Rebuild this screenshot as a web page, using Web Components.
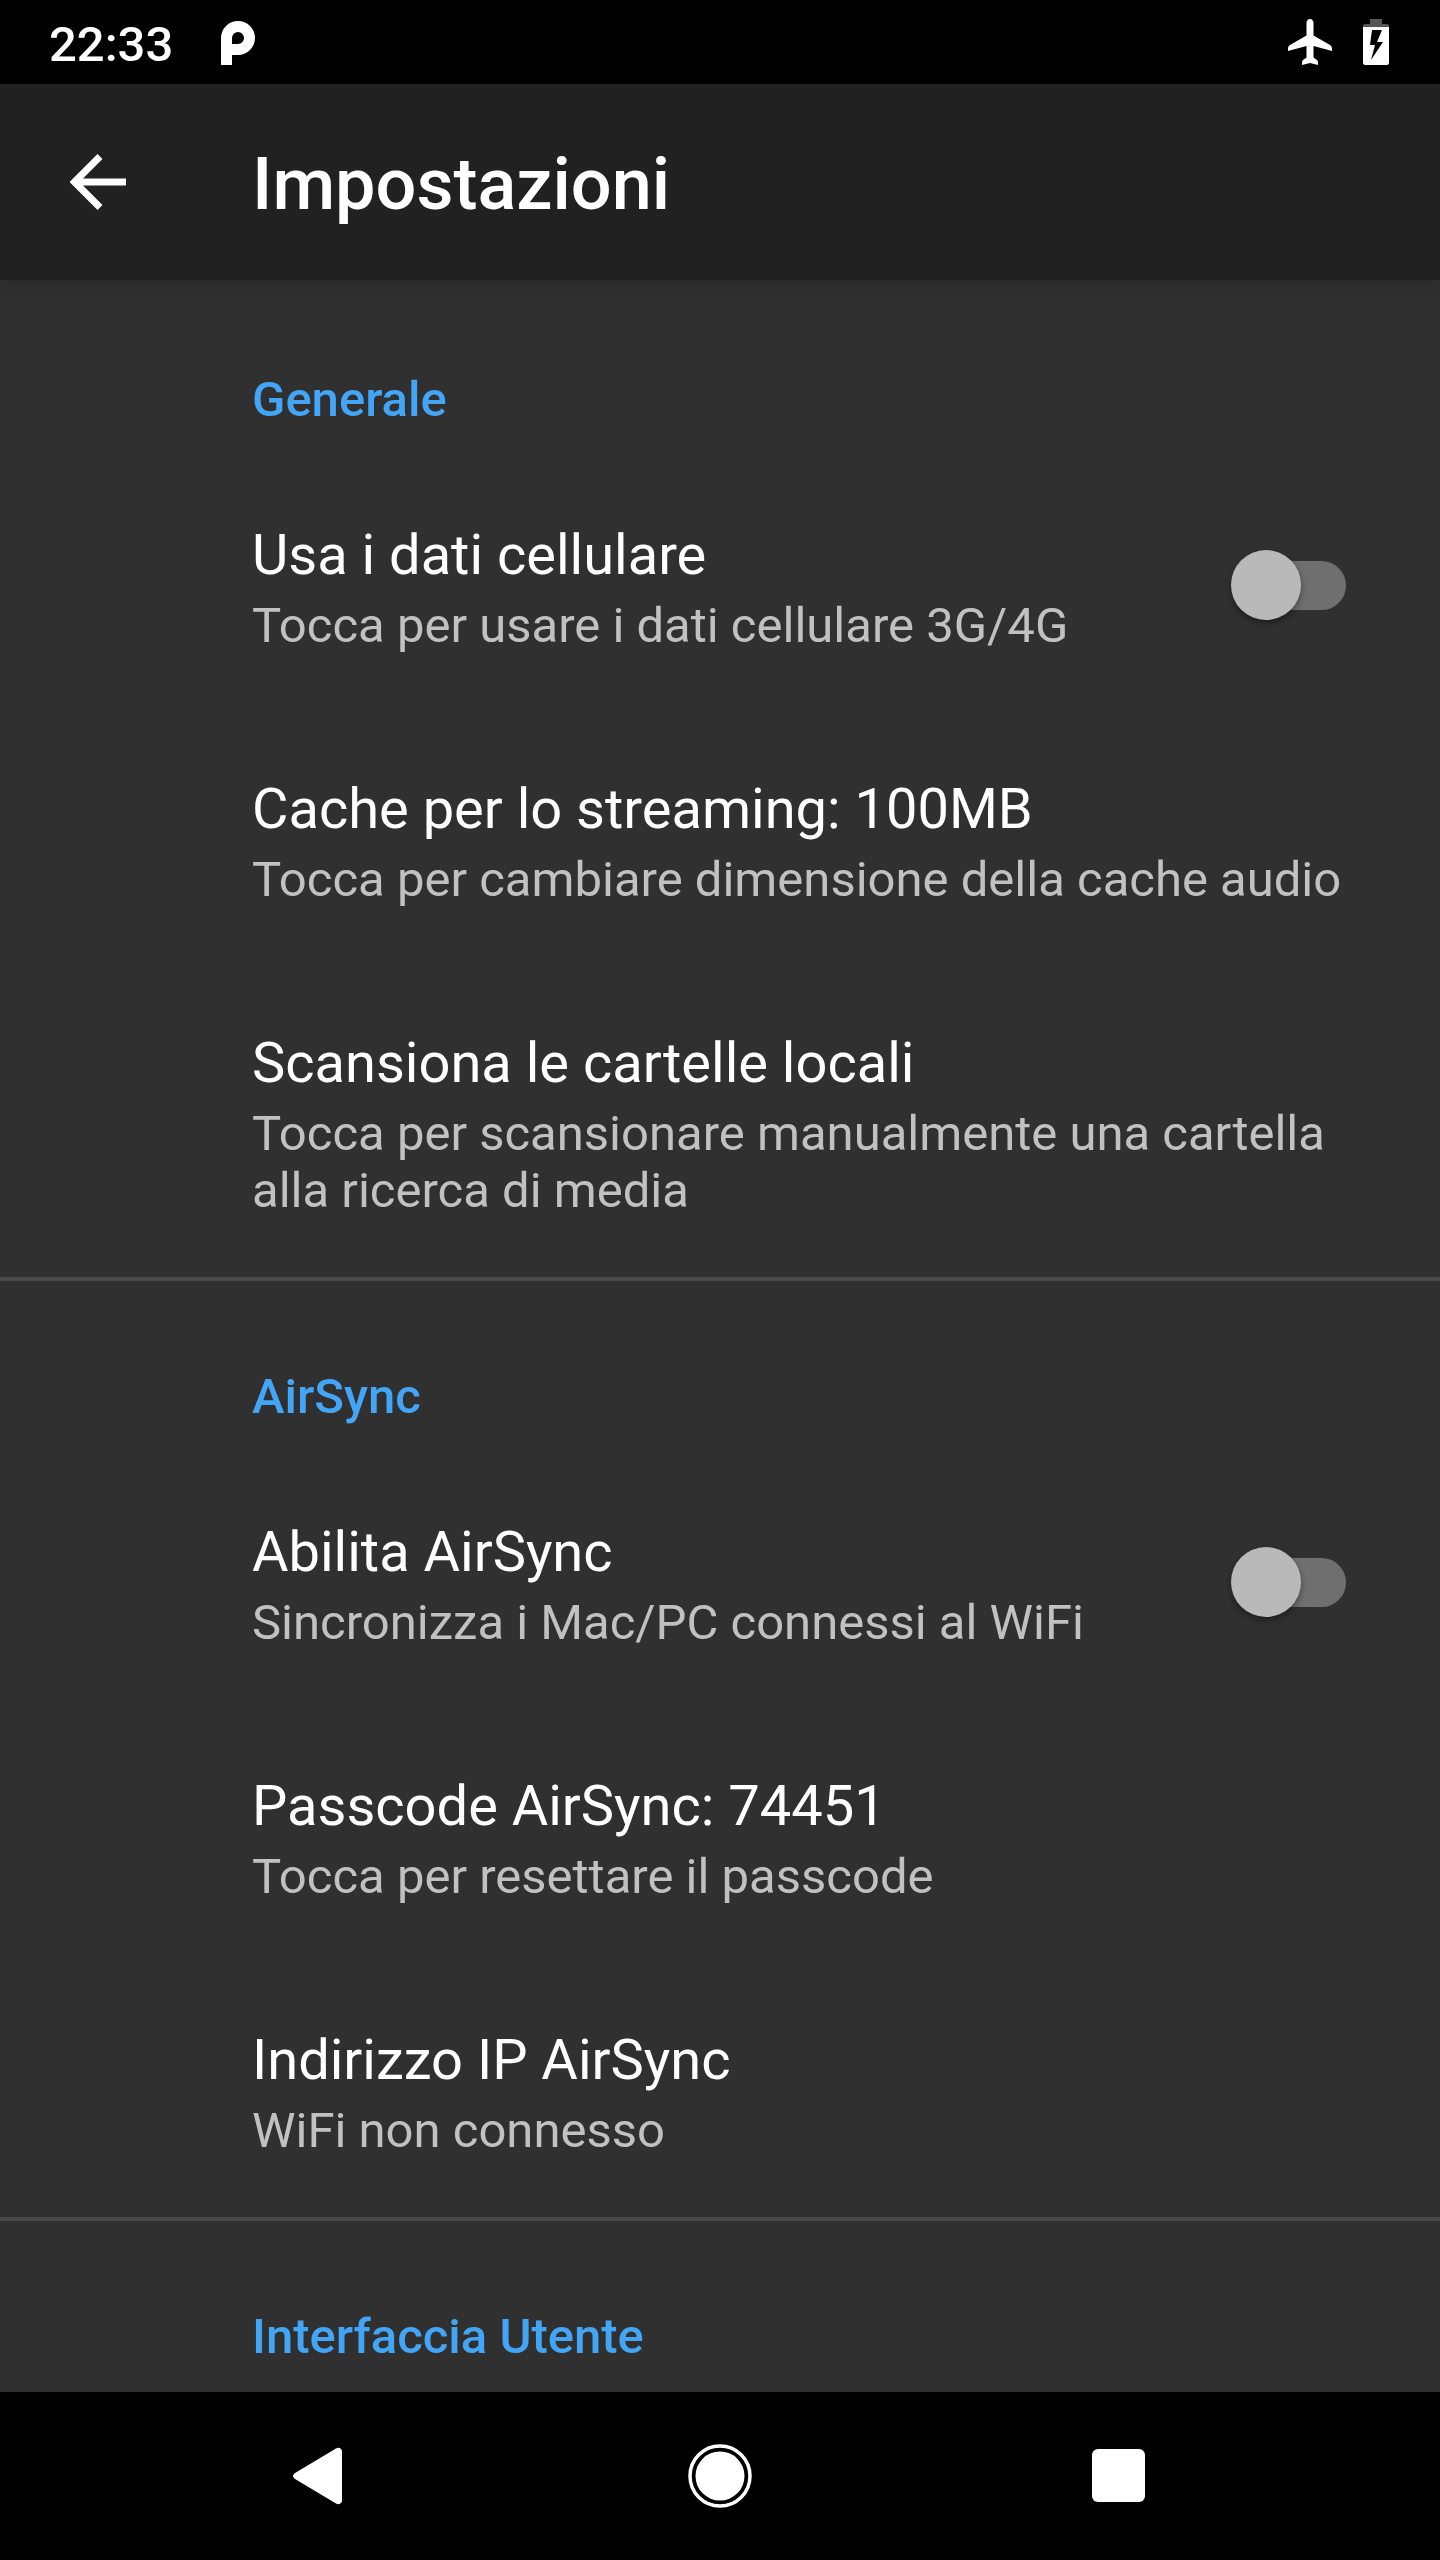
<!DOCTYPE html>
<html lang="it">
<head>
<meta charset="utf-8">
<meta name="viewport" content="width=device-width, initial-scale=1">
<title>Impostazioni</title>
<style>
  html, body {
    height: 100%;
  }

  body {
    margin: 0;
    background: #000000;
    color: #ffffff;
    font-family: Roboto, "Noto Sans", sans-serif;
  }
</style>
</head>
<body>
<settings-screen></settings-screen>

<script>
class StatusBar extends HTMLElement {
  constructor() {
    super();
    this._shadowRoot = this.attachShadow({ mode: 'open' });
  }

  connectedCallback() {
    this._shadowRoot.innerHTML = `
      <style>
      :host {
        display: flex;
        align-items: center;
        justify-content: space-between;
        height: 84px;
        padding: 0 51px 0 49px;
        background: #000000;
        font-size: 49px;
        font-weight: 500;
      }

      .side {
        display: flex;
        align-items: center;
      }

      .left {
        gap: 48px;
      }

      .right {
        gap: 31px;
      }

      time {
        line-height: 58px;
        padding-top: 6px;
      }

      svg {
        display: block;
        fill: #ffffff;
      }
      </style>
      <div class="side left">
        <time>${this.getAttribute('time')}</time>
        <svg width="34" height="46" viewBox="0 -2 34 46" role="img" aria-label="Android P">
          <path fill-rule="evenodd" d="M0 44V17A17 17 0 1 1 17 34H11V44ZM11 23V17A6 6 0 1 1 17 23Z"/>
        </svg>
      </div>
      <div class="side right">
        <svg width="44" height="46" viewBox="0 0 44 46" role="img" aria-label="Modalità aereo">
          <path d="M22 0C24.200 0 25.500 1.700 25.500 4V16.500L42 26C43.500 27 44 28 44 30V32L25.500 27V38.500L29 41C30 42 30 43 30 46L22 44L14 46C14 43 14 42 15 41L18.500 38.500V27L0 32V30C0 28 .5 27 2 26L18.500 16.500V4C18.500 1.700 19.800 0 22 0Z"/>
        </svg>
        <svg width="26" height="46" viewBox="0 0 26 46" role="img" aria-label="Batteria in carica">
          <path fill="#555555" d="M7 0H19V5H24Q26 5 26 7V8H0V7Q0 5 2 5H7Z"/>
          <path fill-rule="evenodd" d="M0 8H26V44Q26 46 24 46H2Q0 46 0 44ZM9 11L7 26H12L8 41L20 23H14L19 11Z"/>
        </svg>
      </div>
    `;
  }
}

class AppToolbar extends HTMLElement {
  constructor() {
    super();
    this._shadowRoot = this.attachShadow({ mode: 'open' });
  }

  connectedCallback() {
    this._shadowRoot.innerHTML = `
      <style>
      :host {
        display: flex;
        align-items: center;
        gap: 56px;
        height: 196px;
        background: #212121;
        box-shadow: 0 4px 12px rgba(0, 0, 0, 0.15);
        position: relative; /* keeps the shadow above the list */
      }

      button {
        width: 196px;
        height: 196px;
        padding: 0 0 0 70px;
        border: 0;
        background: none;
        cursor: pointer;
      }

      svg {
        display: block;
        fill: none;
        stroke: #ffffff;
        stroke-width: 7;
      }

      h1 {
        margin: 0;
        padding-top: 6px;
        font-size: 72px;
        font-weight: 500;
        line-height: 84px;
      }
      </style>
      <button type="button" aria-label="Indietro">
        <svg width="56" height="56" viewBox="0 0 56 56">
          <path d="M56 28H7M30 2.500L4.500 28L30 53.500"/>
        </svg>
      </button>
      <h1><slot></slot></h1>
    `;
  }
}

class SettingsGroup extends HTMLElement {
  constructor() {
    super();
    this._shadowRoot = this.attachShadow({ mode: 'open' });
  }

  connectedCallback() {
    this._shadowRoot.innerHTML = `
      <style>
      :host {
        display: block;
        border-top: 4px solid #494949;
      }

      :host(:first-of-type) {
        border-top-color: transparent;
      }

      h2 {
        margin: 0;
        padding: 87px 94px 29px 252px;
        color: #42a5f5;
        font-size: 49px;
        font-weight: 500;
        line-height: 58px;
      }
      </style>
      <h2>${this.getAttribute('heading')}</h2>
      <slot></slot>
    `;
  }
}

class SettingsItem extends HTMLElement {
  constructor() {
    super();
    this._shadowRoot = this.attachShadow({ mode: 'open' });
  }

  connectedCallback() {
    const isSwitch = this.hasAttribute('switch');
    const tag = isSwitch ? 'label' : 'button';

    this._shadowRoot.innerHTML = `
      <style>
      :host {
        display: block;
      }

      .row {
        display: flex;
        align-items: center;
        justify-content: space-between;
        box-sizing: border-box;
        width: 100%;
        padding: 58px 94px 58px 252px;
        border: 0;
        background: none;
        color: inherit;
        font: inherit;
        text-align: left;
        cursor: pointer;
      }

      .text {
        padding-top: 6px;
      }

      .title,
      .summary {
        display: block;
      }

      .title {
        font-size: 56px;
        line-height: 66px;
        margin-bottom: 9px;
      }

      .summary {
        color: #c1c1c1;
        font-size: 49px;
        line-height: 57px;
      }

      input {
        appearance: none;
        display: grid;
        align-items: center;
        flex: none;
        width: 115px;
        height: 70px;
        margin: 0;
        cursor: pointer;
      }

      /* Track and thumb share one grid cell */
      input::before,
      input::after {
        content: "";
        grid-area: 1 / 1;
      }

      input::before {
        height: 49px;
        margin-left: 10px;
        border-radius: 25px;
        background: #6f6f6f;
      }

      input::after {
        width: 70px;
        height: 70px;
        border-radius: 50%;
        background: #b9b9b9;
        box-shadow: 0 3px 6px rgba(0, 0, 0, 0.4);
      }

      input:checked::after {
        justify-self: end;
      }
      </style>
      <${tag} class="row">
        <span class="text">
          <span class="title">${this.getAttribute('title-text')}</span>
          <span class="summary"><slot></slot></span>
        </span>
        ${isSwitch ? '<input type="checkbox" role="switch">' : ''}
      </${tag}>
    `;
  }
}

class NavigationBar extends HTMLElement {
  constructor() {
    super();
    this._shadowRoot = this.attachShadow({ mode: 'open' });
  }

  connectedCallback() {
    this._shadowRoot.innerHTML = `
      <style>
      :host {
        display: flex;
        justify-content: center;
        height: 168px;
        background: #000000;
      }

      button {
        display: flex;
        align-items: center;
        justify-content: center;
        width: 399px;
        padding: 0;
        border: 0;
        background: none;
        cursor: pointer;
      }

      svg {
        display: block;
        fill: #ffffff;
      }
      </style>
      <button type="button" aria-label="Indietro">
        <svg width="64" height="64" viewBox="0 0 64 64">
          <path d="M47 4.500Q50 3 52 5Q53 6 53 8V56Q53 58 52 59Q50 61 47 59.500L6 35Q2 32 6 29Z"/>
        </svg>
      </button>
      <button type="button" aria-label="Home">
        <svg width="64" height="64" viewBox="0 0 64 64">
          <circle cx="32" cy="32" r="24.500"/>
          <circle cx="32" cy="32" r="30" fill="none" stroke="#ffffff" stroke-width="3.500"/>
        </svg>
      </button>
      <button type="button" aria-label="App recenti">
        <svg width="64" height="64" viewBox="0 0 64 64">
          <rect x="5" y="5" width="53" height="53" rx="6"/>
        </svg>
      </button>
    `;
  }
}

class SettingsScreen extends HTMLElement {
  constructor() {
    super();
    this._shadowRoot = this.attachShadow({ mode: 'open' });
  }

  connectedCallback() {
    this._shadowRoot.innerHTML = `
      <style>
      :host {
        display: flex;
        flex-direction: column;
        height: 100vh;
      }

      status-bar,
      app-toolbar,
      navigation-bar {
        flex: none;
      }

      /* The list scrolls between the two bars */
      main {
        flex: 1;
        min-height: 0;
        overflow-y: auto;
        scrollbar-width: none;
        background: #303030;
      }
      </style>
      <status-bar time="22:33"></status-bar>
      <app-toolbar>Impostazioni</app-toolbar>
      <main>
        <settings-group heading="Generale">
          <settings-item title-text="Usa i dati cellulare" switch>Tocca per usare i dati cellulare 3G/4G</settings-item>
          <settings-item title-text="Cache per lo streaming: 100MB">Tocca per cambiare dimensione della cache audio</settings-item>
          <settings-item title-text="Scansiona le cartelle locali">Tocca per scansionare manualmente una cartella alla ricerca di media</settings-item>
        </settings-group>
        <settings-group heading="AirSync">
          <settings-item title-text="Abilita AirSync" switch>Sincronizza i Mac/PC connessi al WiFi</settings-item>
          <settings-item title-text="Passcode AirSync: 74451">Tocca per resettare il passcode</settings-item>
          <settings-item title-text="Indirizzo IP AirSync">WiFi non connesso</settings-item>
        </settings-group>
        <settings-group heading="Interfaccia Utente"></settings-group>
      </main>
      <navigation-bar></navigation-bar>
    `;
  }
}

customElements.define('status-bar', StatusBar);
customElements.define('app-toolbar', AppToolbar);
customElements.define('settings-group', SettingsGroup);
customElements.define('settings-item', SettingsItem);
customElements.define('navigation-bar', NavigationBar);
customElements.define('settings-screen', SettingsScreen);
</script>
</body>
</html>
